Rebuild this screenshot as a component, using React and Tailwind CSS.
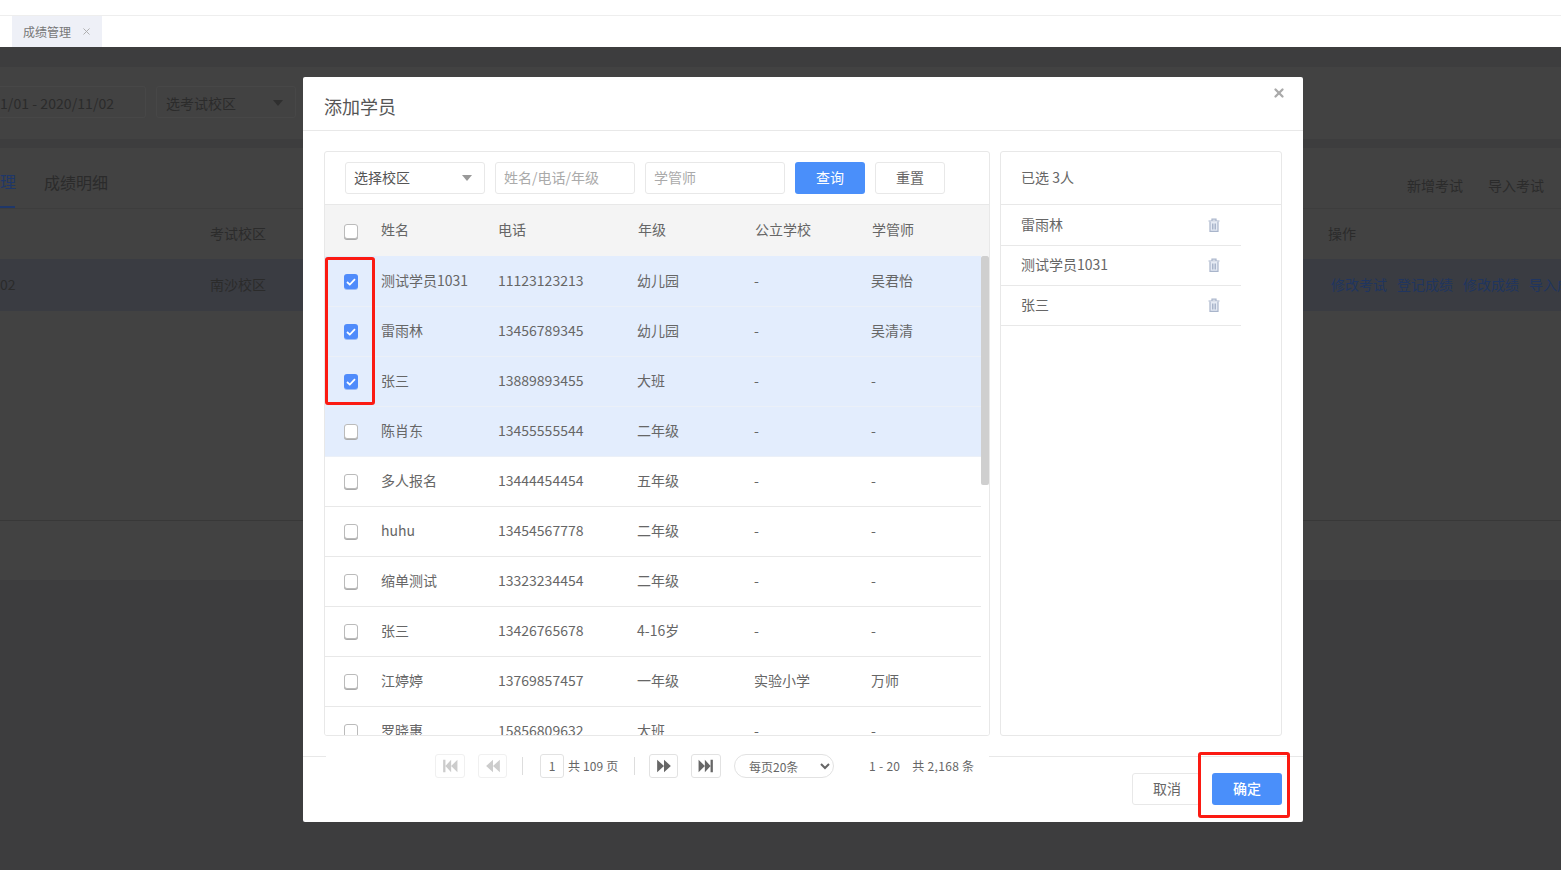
import { X } from "lucide-react";

const STUDENTS = [
  { name: "测试学员1031", phone: "11123123213", grade: "幼儿园", school: "-", teacher: "吴君怡", checked: true, active: true },
  { name: "雷雨林", phone: "13456789345", grade: "幼儿园", school: "-", teacher: "吴清清", checked: true, active: true },
  { name: "张三", phone: "13889893455", grade: "大班", school: "-", teacher: "-", checked: true, active: true },
  { name: "陈肖东", phone: "13455555544", grade: "二年级", school: "-", teacher: "-", active: true },
  { name: "多人报名", phone: "13444454454", grade: "五年级", school: "-", teacher: "-" },
  { name: "huhu", phone: "13454567778", grade: "二年级", school: "-", teacher: "-" },
  { name: "缩单测试", phone: "13323234454", grade: "二年级", school: "-", teacher: "-" },
  { name: "张三", phone: "13426765678", grade: "4-16岁", school: "-", teacher: "-" },
  { name: "江婷婷", phone: "13769857457", grade: "一年级", school: "实验小学", teacher: "万师" },
  { name: "罗晓惠", phone: "15856809632", grade: "大班", school: "-", teacher: "-" },
];

const SELECTED = ["雷雨林", "测试学员1031", "张三"];

const Caret = ({ className }) => (
  <svg width="10" height="6" viewBox="0 0 10 6" className={className}>
    <path d="M0 0h10L5 6z" fill="currentColor" />
  </svg>
);

const Checkbox = ({ checked }) =>
  checked ? (
    <span className="flex h-[15px] w-[14px] items-center justify-center rounded-[3px] bg-[#4f8bfb] shadow-[0_1px_0_#9dbcf5]">
      <svg width="10" height="8" viewBox="0 0 10 8">
        <path d="M1 4l2.8 2.6L9 1.2" fill="none" stroke="#fff" strokeWidth="1.8" />
      </svg>
    </span>
  ) : (
    <span className="block h-[15px] w-[14px] rounded-[3px] border border-[#bbb] bg-white shadow-[0_1px_0_#aaa]" />
  );

const Trash = () => (
  <svg width="12" height="14" viewBox="0 0 12 14" className="mb-[2px] text-[#a9b5cb]">
    <path d="M0.5 3h11M4 3V1.2h4V3" fill="none" stroke="currentColor" strokeWidth="1.2" />
    <path d="M2 3.5v9.8h8V3.5" fill="#e6ebf4" stroke="currentColor" strokeWidth="1.2" />
    <path d="M4.5 5.5v6M6 5.5v6M7.5 5.5v6" stroke="currentColor" />
  </svg>
);

const PageIcon = ({ type }) => {
  const paths = {
    first: "M1 1.5h2v11H1zM3 7l5-5.5v11zM8 7l5.5-5.5v11z",
    prev: "M1 7l6-5.5v11zM7 7l6-5.5v11z",
    next: "M1 1.5L7 7l-6 5.5zM7 1.5L13 7l-6 5.5z",
    last: "M.5 1.5L6 7 .5 12.5zM6 1.5L11 7l-5 5.5zM11 1.5h2v11h-2z",
  };
  return (
    <svg width="16" height="16" viewBox="0 0 14 14">
      <path d={paths[type]} fill="currentColor" />
    </svg>
  );
};

const PageButton = ({ type, disabled, className = "" }) => (
  <button
    className={`flex h-6 items-center justify-center rounded-[3px] border ${
      disabled ? "border-[#f0f0f0] text-[#ccc]" : "border-[#e2e2e2] text-[#666]"
    } ${className}`}
  >
    <PageIcon type={type} />
  </button>
);

function Backdrop() {
  return (
    <div className="flex h-[823px] flex-col overflow-hidden whitespace-nowrap bg-[#3d3d3e] pt-5 text-sm text-[#2b2b2b]">
      <div className="flex h-[72px] items-center gap-[10px] bg-[#424242] pb-[2px]">
        <div className="flex h-8 w-[146px] items-center rounded-r-[3px] border border-l-0 border-[#474747] pt-[2px] tracking-[0.06px]">1/01 - 2020/11/02</div>
        <div className="flex h-8 w-[140px] items-center justify-between rounded-[3px] border border-[#474747] pl-[9px] pr-3 pt-[2px]">
          选考试校区
          <Caret className="text-[#2f2f2f]" />
        </div>
      </div>
      <div className="mt-[9px] h-[432px] bg-[#424242]">
        <div className="flex h-[61px] items-center justify-between border-b border-[#3d3d3d]">
          <div className="flex h-full items-center gap-[29px] pt-[7px] text-base">
            <span className="flex h-full w-[15px] items-center border-b-2 border-[#1f3769] text-[#1f3769]">理</span>
            <span>成绩明细</span>
          </div>
          <div className="mr-[17px] flex gap-[25px] pt-[14px]">
            <span>新增考试</span>
            <span>导入考试</span>
          </div>
        </div>
        <div className="grid h-[50px] grid-cols-[210px_1118px_auto] items-center pb-[2px]">
          <span />
          <span>考试校区</span>
          <span>操作</span>
        </div>
        <div className="grid h-[52px] grid-cols-[210px_1118px_auto] items-center bg-[#3a3c42] pb-[2px]">
          <span>02</span>
          <span>南沙校区</span>
          <span className="flex gap-[10px] pl-[3px] text-[#20355f]">
            <span>修改考试</span>
            <span>登记成绩</span>
            <span>修改成绩</span>
            <span>导入成绩</span>
          </span>
        </div>
        <div className="h-[210px] border-b border-[#383838]" />
      </div>
    </div>
  );
}

function StudentTable() {
  return (
    <div className="flex h-[585px] w-[666px] flex-col overflow-hidden rounded-[3px] border border-[#e8e8e8]">
      <div className="flex h-[53px] shrink-0 items-center gap-[10px] border-b border-[#e8e8e8] pl-5">
        <div className="flex h-8 w-[140px] items-center justify-between rounded-[3px] border border-[#e8e8e8] pb-[2px] pl-2 pr-3 text-[#555]">
          选择校区
          <Caret className="mt-[2px] text-[#999]" />
        </div>
        <input placeholder="姓名/电话/年级" className="h-8 w-[140px] rounded-[3px] border border-[#e8e8e8] px-2 pb-[3px] outline-none placeholder:text-[#aaa]" />
        <input placeholder="学管师" className="h-8 w-[140px] rounded-[3px] border border-[#e8e8e8] px-2 pb-[3px] outline-none placeholder:text-[#aaa]" />
        <button className="h-8 w-[70px] rounded-[3px] bg-[#4a8ffa] pb-[3px] text-white">查询</button>
        <button className="h-8 w-[70px] rounded-[3px] border border-[#e8e8e8] pb-[3px] text-[#666]">重置</button>
      </div>
      <div className="grid h-[51px] shrink-0 grid-cols-[53px_120px_140px_117px_117px_1fr] items-center bg-[#f4f4f4] pb-[4px] text-[#666]">
        <span className="flex justify-center pr-[2px] pt-[5px]"><Checkbox /></span>
        <span className="pl-[3px]">姓名</span>
        <span>电话</span>
        <span>年级</span>
        <span>公立学校</span>
        <span>学管师</span>
      </div>
      <div className="flex min-h-0 flex-1">
        <div className="w-[656px] overflow-hidden">
          {STUDENTS.map((s, i) => (
            <div
              key={i}
              className={`grid grid-cols-[53px_118px_139px_117px_117px_1fr] items-center border-b pb-[4px] text-[#666] ${
                i === 0 ? "h-[51px] pt-px" : "h-[50px]"
              } ${s.active ? "border-[#ebf0f8] bg-[#e3edfd]" : "border-[#e8e8e8] bg-white"}`}
            >
              <span className="flex justify-center pr-[2px] pt-[4px]"><Checkbox checked={s.checked} /></span>
              <span className="pl-[3px]">{s.name}</span>
              <span className="pl-[2px]">{s.phone}</span>
              <span className="pl-[2px]">{s.grade}</span>
              <span className="pl-[2px]">{s.school}</span>
              <span className="pl-[2px]">{s.teacher}</span>
            </div>
          ))}
        </div>
        <div className="flex-1 bg-white">
          <div className="h-[229px] rounded-[2px] bg-[#cfcfcf]" />
        </div>
      </div>
    </div>
  );
}

function SelectedList() {
  return (
    <div className="h-[585px] w-[282px] rounded-[3px] border border-[#e8e8e8] text-[#666]">
      <div className="flex h-[53px] items-center border-b border-[#e8e8e8] pb-[3px] pl-5">已选 3人</div>
      <div className="pt-px">
        {SELECTED.map((name) => (
          <div key={name} className="flex h-10 w-60 items-center justify-between border-b border-[#e8e8e8] pl-5 pr-[21px]">
            <span className="pb-[3px]">{name}</span>
            <Trash />
          </div>
        ))}
      </div>
    </div>
  );
}

function Pagination() {
  return (
    <div className="absolute left-[23px] top-[677px] flex h-6 w-[663px] items-center whitespace-nowrap bg-white pl-[109px] text-xs text-[#666]">
      <PageButton type="first" disabled className="w-[30px]" />
      <PageButton type="prev" disabled className="ml-[13px] w-[29px]" />
      <span className="ml-[15px] h-[18px] w-px bg-[#ddd]" />
      <span className="ml-[17px] flex h-6 w-6 items-center justify-center rounded-[3px] border border-[#e2e2e2]">1</span>
      <span className="ml-1 w-[50px] tracking-[0.15px]">共 109 页</span>
      <span className="ml-[16px] h-[18px] w-px bg-[#ddd]" />
      <PageButton type="next" className="ml-[14px] w-[29px]" />
      <PageButton type="last" className="ml-[13px] w-[30px]" />
      <select defaultValue="20" className="ml-[13px] h-6 w-[100px] rounded-full border border-[#e2e2e2] bg-white pl-[10px] text-xs outline-none">
        <option value="20">每页20条</option>
      </select>
      <span className="ml-[35px] tracking-[0.3px]">1 - 20</span>
      <span className="ml-3 tracking-[0.3px]">共 2,168 条</span>
    </div>
  );
}

function Modal() {
  return (
    <div className="absolute left-[303px] top-[77px] flex h-[745px] w-[1000px] flex-col rounded-[2px] bg-white text-sm">
      <div className="flex h-[54px] shrink-0 items-center justify-between border-b border-[#e8e8e8] pl-[21px] pr-[17px]">
        <span className="pt-[4px] text-lg text-[#555]">添加学员</span>
        <X size={14} strokeWidth={4} className="-mt-[22px] text-[#aaa]" />
      </div>
      <div className="flex h-[625px] shrink-0 gap-[10px] pl-[21px] pt-5">
        <StudentTable />
        <SelectedList />
      </div>
      <div className="flex flex-1 justify-end gap-3 border-t border-[#e8e8e8] pr-[21px] pt-4">
        <button className="h-8 w-[68px] rounded-[3px] border border-[#e8e8e8] pb-[3px] pl-[2px] text-[#666]">取消</button>
        <button className="h-8 w-[70px] rounded-[3px] bg-[#4a8ffa] pb-[3px] font-medium text-white">确定</button>
      </div>
      <Pagination />
    </div>
  );
}

export default function App() {
  return (
    <div className="relative h-[870px] overflow-hidden font-['Noto_Sans_CJK_SC','Noto_Sans',sans-serif]">
      <div className="h-[15px] bg-white" />
      <div className="flex h-8 border-t border-[#eeeeee] bg-white pl-3">
        <div className="flex w-[90px] items-center gap-[10px] bg-[#eef0f7] pl-[11px] text-xs text-[#777]">
          成绩管理
          <X size={11} className="text-[#aaa]" />
        </div>
      </div>
      <Backdrop />
      <Modal />
      {/* red annotations over the screenshot */}
      <div className="absolute left-[325px] top-[257px] h-[148px] w-[50px] rounded-[3px] border-[3px] border-[#fb1a12]" />
      <div className="absolute left-[1198px] top-[752px] h-[66px] w-[92px] rounded-[3px] border-[3px] border-[#fb1a12]" />
    </div>
  );
}
